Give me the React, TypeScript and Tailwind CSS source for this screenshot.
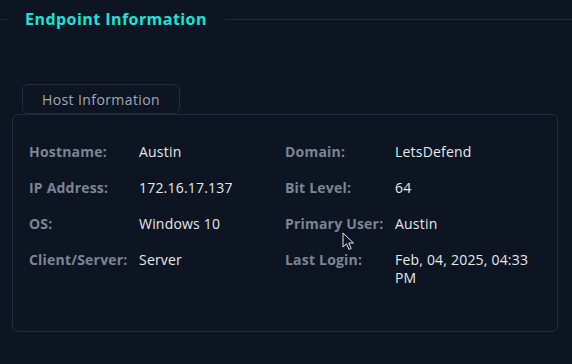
import React from "react";

const LEFT_ROWS: [string, string][] = [
  ["Hostname:", "Austin"],
  ["IP Address:", "172.16.17.137"],
  ["OS:", "Windows 10"],
  ["Client/Server:", "Server"],
];

const RIGHT_ROWS: [string, string][] = [
  ["Domain:", "LetsDefend"],
  ["Bit Level:", "64"],
  ["Primary User:", "Austin"],
  ["Last Login:", "Feb, 04, 2025, 04:33 PM"],
];

export default function App() {
  return (
    <div
      className="relative w-[572px] h-[364px] overflow-hidden bg-[#0d1522] pt-[10px]"
      style={{ fontFamily: '"Open Sans", "DejaVu Sans", sans-serif' }}
    >
      {/* Section header */}
      <div className="flex items-center h-[18px]">
        <div className="w-[7px] h-px bg-[#1f2c42]" />
        <h1 className="px-[18px] text-[16px] leading-[18px] font-bold text-[#1de2d6] tracking-[0.45px]">
          Endpoint Information
        </h1>
        <div className="flex-1 h-px bg-[#1f2c42]" />
      </div>

      <div className="mt-[56px] px-[12px]">
        {/* Tab */}
        <div className="ml-[10px] w-[158px] h-[30px] flex items-center justify-center rounded-[6px] border border-[#1f2c42] text-[14px] tracking-[0.4px] text-[#a0a7b2]">
          Host Information
        </div>

        {/* Panel */}
        <div className="w-[546px] h-[218px] rounded-[6px] border border-[#1f2c42] px-[16px] pt-[28px]">
          <div className="grid grid-cols-2">
            <InfoColumn rows={LEFT_ROWS} />
            <InfoColumn rows={RIGHT_ROWS} />
          </div>
        </div>
      </div>

      {/* Mouse cursor */}
      <svg className="absolute left-[342px] top-[232px]" width="13" height="19" viewBox="0 0 13 19">
        <path d="M1 1 L1 15 L4.5 11.8 L7 17.5 L9.2 16.5 L6.8 11 L11.5 11 Z" fill="#0d1522" stroke="#e5e7eb" strokeWidth="1" />
      </svg>
    </div>
  );
}

function InfoColumn({ rows }: { rows: [string, string][] }) {
  return (
    <div className="flex flex-col gap-[18px]">
      {rows.map(([label, value]) => (
        <div key={label} className="flex text-[14px] leading-[18px] tracking-[0.2px]">
          <span className="w-[110px] shrink-0 font-bold text-[#7b8594]">{label}</span>
          <span className="w-[146px] text-[#e6e8eb]">{value}</span>
        </div>
      ))}
    </div>
  );
}
